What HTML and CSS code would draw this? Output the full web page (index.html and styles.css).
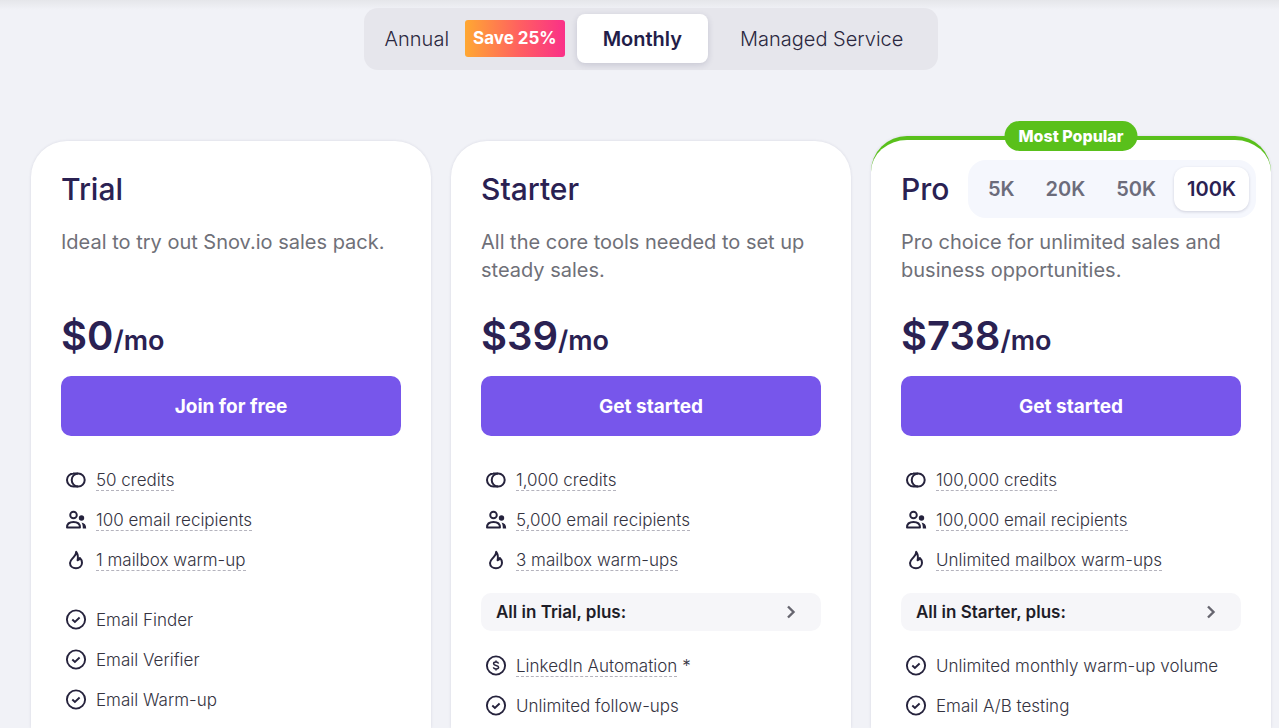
FILE: index.html
```html
<!DOCTYPE html>
<html lang="en">
<head>
<meta charset="utf-8">
<meta name="viewport" content="width=device-width, initial-scale=1">
<title>Pricing</title>
<link rel="stylesheet" href="styles.css">
</head>
<body>
<svg class="sprite" aria-hidden="true">
  <symbol id="coins" viewBox="0 0 22 22"><g fill="none" stroke="currentColor" stroke-width="2"><circle cx="13.200" cy="11" r="6.500"/><path d="M8.500 4.500a6.500 6.500 0 0 0 0 13M8 4.500h5M8 17.500h5"/></g></symbol>
  <symbol id="people" viewBox="0 0 22 22"><g fill="none" stroke="currentColor" stroke-width="1.900"><circle cx="8.500" cy="6" r="3.300"/><path d="M2 18.500C2 15 4.500 13 8.500 13s6.500 2 6.500 5.500z" stroke-linejoin="round"/></g><circle cx="16.500" cy="9" r="2.700" fill="currentColor"/><path d="M16.500 13.500c3 .5 4.700 2.500 4.700 5.900h-3.400c0-2.300-.2-4.100-1.300-5.900z" fill="currentColor"/></symbol>
  <symbol id="flame" viewBox="0 0 22 22"><path d="M11.200 2.800c.2 3-1.700 4.400-3.300 6.200C6.200 10.800 5 12 5 14c0 3.200 2.700 5.200 6 5.200s6-2.200 6-5.400c0-2-.8-3.600-2.100-4.800-.4 1.300-1.100 2-2.300 2.300.7-3.300.4-6.200-1.400-8.500z" fill="none" stroke="currentColor" stroke-width="2" stroke-linejoin="round"/></symbol>
  <symbol id="check" viewBox="0 0 22 22"><g fill="none" stroke="currentColor" stroke-width="1.900"><circle cx="11" cy="10.500" r="9.100"/><path d="M7.300 10.500l2.600 2.500 4.700-4.500"/></g></symbol>
  <symbol id="dollar" viewBox="0 0 22 22"><g fill="none" stroke="currentColor" stroke-width="1.900"><circle cx="11" cy="10.500" r="9.100"/><path d="M13.500 8.700c-.2-1-1.200-1.600-2.500-1.600s-2.400.6-2.400 1.600c0 2.500 5 1.100 5 3.600 0 1-1.100 1.700-2.500 1.700s-2.500-.7-2.600-1.700M11 5.500v1.600M11 14v1.500" stroke-width="1.500"/></g></symbol>
  <symbol id="chevron" viewBox="0 0 16 16"><path d="M5 2.500 10.500 8 5 13.500" fill="none" stroke="currentColor" stroke-width="2.400"/></symbol>
</svg>
<main class="page">
  <nav class="billing" aria-label="Billing period">
    <button class="tab tab-annual" type="button">Annual <span class="save">Save 25%</span></button>
    <button class="tab tab-active" type="button" aria-pressed="true">Monthly</button>
    <button class="tab tab-managed" type="button">Managed Service</button>
  </nav>
  <div class="plans">
    <section class="card">
      <div class="card-head"><h2>Trial</h2></div>
      <p class="desc">Ideal to try out Snov.io sales pack.</p>
      <p class="price">$0<span class="per">/mo</span></p>
      <button class="cta" type="button">Join for free</button>
      <ul class="list">
        <li><svg class="icon"><use href="#coins"/></svg><span class="hint">50 credits</span></li>
        <li><svg class="icon"><use href="#people"/></svg><span class="hint">100 email recipients</span></li>
        <li><svg class="icon"><use href="#flame"/></svg><span class="hint">1 mailbox warm-up</span></li>
      </ul>
      <ul class="list features">
        <li><svg class="icon"><use href="#check"/></svg><span>Email Finder</span></li>
        <li><svg class="icon"><use href="#check"/></svg><span>Email Verifier</span></li>
        <li><svg class="icon"><use href="#check"/></svg><span>Email Warm-up</span></li>
      </ul>
    </section>
    <section class="card">
      <div class="card-head"><h2>Starter</h2></div>
      <p class="desc">All the core tools needed to set up steady sales.</p>
      <p class="price">$39<span class="per">/mo</span></p>
      <button class="cta" type="button">Get started</button>
      <ul class="list">
        <li><svg class="icon"><use href="#coins"/></svg><span class="hint">1,000 credits</span></li>
        <li><svg class="icon"><use href="#people"/></svg><span class="hint">5,000 email recipients</span></li>
        <li><svg class="icon"><use href="#flame"/></svg><span class="hint">3 mailbox warm-ups</span></li>
      </ul>
      <button class="expand" type="button">All in Trial, plus:<svg class="chevron"><use href="#chevron"/></svg></button>
      <ul class="list">
        <li><svg class="icon"><use href="#dollar"/></svg><span class="hint">LinkedIn Automation</span><span class="star">*</span></li>
        <li><svg class="icon"><use href="#check"/></svg><span>Unlimited follow-ups</span></li>
      </ul>
    </section>
    <section class="card card-popular">
      <span class="badge">Most Popular</span>
      <div class="card-head"><h2>Pro</h2>
        <div class="tiers" role="group" aria-label="Credits">
          <button class="tier" type="button">5K</button>
          <button class="tier" type="button">20K</button>
          <button class="tier" type="button">50K</button>
          <button class="tier tier-active" type="button" aria-pressed="true">100K</button>
        </div>
      </div>
      <p class="desc">Pro choice for unlimited sales and business opportunities.</p>
      <p class="price">$738<span class="per">/mo</span></p>
      <button class="cta" type="button">Get started</button>
      <ul class="list">
        <li><svg class="icon"><use href="#coins"/></svg><span class="hint">100,000 credits</span></li>
        <li><svg class="icon"><use href="#people"/></svg><span class="hint">100,000 email recipients</span></li>
        <li><svg class="icon"><use href="#flame"/></svg><span class="hint">Unlimited mailbox warm-ups</span></li>
      </ul>
      <button class="expand" type="button">All in Starter, plus:<svg class="chevron"><use href="#chevron"/></svg></button>
      <ul class="list">
        <li><svg class="icon"><use href="#check"/></svg><span>Unlimited monthly warm-up volume</span></li>
        <li><svg class="icon"><use href="#check"/></svg><span>Email A/B testing</span></li>
      </ul>
    </section>
  </div>
</main>
</body>
</html>
```
FILE: styles.css
```css
* { box-sizing: border-box; }
body { margin: 0; background: #f1f2f7; color: #2a2152; font-family: Inter, "Liberation Sans", sans-serif; }
button { border: 0; margin: 0; font-family: inherit; color: inherit; cursor: pointer; }
h2, p, ul { margin: 0; padding: 0; }
.sprite { display: none; }
.page { display: flex; flex-direction: column; min-height: 100vh; padding: 8px 8px 0 31px; background: linear-gradient(#e5e6ea, #f1f2f7 10px); }
.billing { display: flex; align-self: center; height: 62px; padding: 6px; border-radius: 14px; background: #e6e6ec; }
.tab { display: flex; align-items: center; background: none; border-radius: 8px; font-size: 20px; font-weight: 300; color: #2b2840; height: 49px; white-space: nowrap; }
.tab-annual { gap: 16px; padding: 0 12px 0 15px; }
.save { padding: 0 8px; line-height: 37px; border-radius: 3px; background: linear-gradient(90deg, #ffa832, #ff5f61 55%, #fa3088); color: #fff; font-size: 17px; font-weight: 700; }
.tab-active { padding: 0 26px; background: #fff; color: #231d49; font-weight: 600; box-shadow: 0 2px 6px rgba(40, 40, 80, .16); }
.tab-managed { padding: 0 29px 0 32px; }
.plans { flex: 1; display: grid; grid-template-columns: repeat(3, 1fr); gap: 20px; margin-top: 71px; }
.card { padding: 30px 30px 0; border-radius: 36px 36px 0 0; background: #fff; box-shadow: 0 0 3px rgba(40, 40, 80, .12); }
.card-head { display: flex; align-items: center; justify-content: space-between; height: 36px; }
h2 { font-size: 30px; font-weight: 500; line-height: 36px; }
.desc { min-height: 56px; margin-top: 21px; font-size: 20px; line-height: 28px; color: #6f7078; }
.price { margin-top: 26px; font-size: 40px; font-weight: 600; line-height: 52px; }
.per { font-size: 27px; line-height: 1; }
.cta { display: block; width: 100%; height: 60px; margin: 14px 0 24px; border-radius: 10px; background: #7756eb; color: #fff; font-size: 19px; font-weight: 700; }
.list { list-style: none; }
.list li { display: flex; align-items: center; height: 40px; padding-left: 4px; font-size: 17px; font-weight: 300; line-height: 20px; color: #34333f; white-space: nowrap; }
.features { margin-top: 20px; }
.icon { flex: none; width: 22px; height: 22px; margin-right: 9px; color: #25223c; }
.hint { padding-top: 1px; border-bottom: 1px dashed #b4b3bd; }
.star { margin-left: 5px; }
.expand { display: flex; align-items: center; justify-content: space-between; width: 100%; height: 38px; margin: 13px 0 15px; padding: 0 22px 0 15px; border-radius: 10px; background: #f6f6f9; color: #1e1d28; font-size: 17px; font-weight: 600; }
.chevron { width: 16px; height: 16px; color: #66656f; }
.card-popular { position: relative; margin-top: -5px; padding-top: 31px; border-top: 4px solid #59c01b; }
.badge { position: absolute; top: -19px; left: 50%; transform: translateX(-50%); padding: 0 14px; border-radius: 15px; background: #59c01b; color: #fff; font-size: 16px; font-weight: 800; line-height: 30px; white-space: nowrap; }
.tiers { display: flex; gap: 5px; height: 58px; padding: 7px; margin-right: -15px; border-radius: 18px; background: #f5f7fd; }
.tier { padding: 0 13px; border-radius: 12px; background: none; color: #6c6c7b; font-size: 20px; font-weight: 600; height: 44px; }
.tier-active { background: #fff; color: #2a2152; box-shadow: 0 1px 3px rgba(40, 40, 80, .18); }
```
